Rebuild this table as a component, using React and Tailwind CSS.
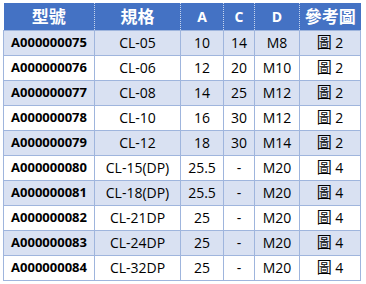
import React from 'react';

const rows = [
  ['A000000075', 'CL-05', '10', '14', 'M8', '2'],
  ['A000000076', 'CL-06', '12', '20', 'M10', '2'],
  ['A000000077', 'CL-08', '14', '25', 'M12', '2'],
  ['A000000078', 'CL-10', '16', '30', 'M12', '2'],
  ['A000000079', 'CL-12', '18', '30', 'M14', '2'],
  ['A000000080', 'CL-15(DP)', '25.5', '-', 'M20', '4'],
  ['A000000081', 'CL-18(DP)', '25.5', '-', 'M20', '4'],
  ['A000000082', 'CL-21DP', '25', '-', 'M20', '4'],
  ['A000000083', 'CL-24DP', '25', '-', 'M20', '4'],
  ['A000000084', 'CL-32DP', '25', '-', 'M20', '4'],
];

const font = { fontFamily: '"Open Sans", "Noto Sans CJK TC", sans-serif' };

export default function App() {
  return (
    <div className="w-[366px] h-[284px] bg-white pt-[3px] pl-[3px]" style={font}>
      <table className="table-fixed border-collapse text-[14px] text-black">
        <colgroup>
          <col className="w-[91px]" />
          <col className="w-[86px]" />
          <col className="w-[43px]" />
          <col className="w-[31px]" />
          <col className="w-[45px]" />
          <col className="w-[61px]" />
        </colgroup>
        <thead>
          <tr className="h-[27px] bg-[#4472c4] text-white font-bold">
            <th className="p-0 text-[17px] border-r border-dotted border-white/70">型號</th>
            <th className="p-0 text-[17px] border-r border-dotted border-white/70">規格</th>
            <th className="p-0 text-[14px] border-r border-dotted border-white/70">A</th>
            <th className="p-0 text-[14px] border-r border-dotted border-white/70">C</th>
            <th className="p-0 text-[14px] border-r border-dotted border-white/70">D</th>
            <th className="p-0 text-[17px]">參考圖</th>
          </tr>
        </thead>
        <tbody>
          {rows.map((r, i) => (
            <tr key={r[0]} className={`h-[25px] ${i % 2 === 0 ? 'bg-[#d9e1f2]' : 'bg-white'}`}>
              <td className="p-0 text-center font-bold text-[13px] border border-[#9fb5dd]">{r[0]}</td>
              <td className="p-0 text-center border border-[#9fb5dd]">{r[1]}</td>
              <td className="p-0 text-center border border-[#9fb5dd]">{r[2]}</td>
              <td className="p-0 text-center border border-[#9fb5dd]">{r[3]}</td>
              <td className="p-0 text-center border border-[#9fb5dd]">{r[4]}</td>
              <td className="p-0 text-center border border-[#9fb5dd]">
                <span className="text-[15px]">圖</span> {r[5]}
              </td>
            </tr>
          ))}
        </tbody>
      </table>
    </div>
  );
}
